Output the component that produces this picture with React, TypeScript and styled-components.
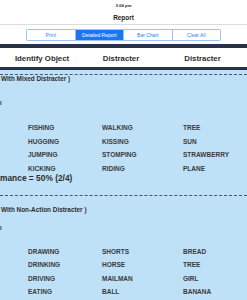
import React from "react";
import styled, { createGlobalStyle } from "styled-components";

const Global = createGlobalStyle`
  html, body { margin: 0; padding: 0; background: #ffffff; overflow: hidden; }
  body { font-family: "Liberation Sans", Arial, sans-serif; width: 247px; height: 300px; }
`;

const Page = styled.div`
  width: 247px;
  height: 300px;
  display: flex;
  flex-direction: column;
  overflow: hidden;
  background: #ffffff;
`;

const StatusBar = styled.div`
  height: 9px;
  display: flex;
  align-items: center;
  justify-content: center;
  font-size: 4.2px;
  font-weight: 700;
  color: #222;
  padding-top: 1px;
`;

const NavTitle = styled.div`
  height: 14px;
  display: flex;
  align-items: center;
  justify-content: center;
  font-size: 6.4px;
  font-weight: 700;
  color: #1c1c1c;
  border-bottom: 1px solid #dcdcdc;
`;

const ToolbarRow = styled.div`
  height: 19px;
  display: flex;
  align-items: center;
  justify-content: center;
`;

const Segmented = styled.div`
  display: flex;
  width: 195px;
  height: 12px;
  border: 1px solid #9cc3f5;
  border-radius: 1.5px;
  box-sizing: border-box;
  overflow: hidden;
`;

const Segment = styled.div<{ $active?: boolean }>`
  flex: 1;
  display: flex;
  align-items: center;
  justify-content: center;
  font-size: 5px;
  color: ${(p) => (p.$active ? "#ffffff" : "#2d7ff0")};
  background: ${(p) => (p.$active ? "#1877f6" : "#ffffff")};
  & + & {
    border-left: 1px solid #9cc3f5;
  }
`;

const NavyBar = styled.div<{ $h: number }>`
  height: ${(p) => p.$h}px;
  background: #28324a;
  flex-shrink: 0;
`;

const HeaderRow = styled.div`
  height: 19px;
  display: grid;
  grid-template-columns: 84px 74px 1fr;
  align-items: center;
  background: #ffffff;
  font-size: 7.8px;
  font-weight: 700;
  color: #2e2e2e;
`;

const HeaderCell = styled.div`
  text-align: center;
  padding-top: 2px;
`;

const Content = styled.div`
  flex: 1;
  background: #bfe1f8;
  display: flex;
  flex-direction: column;
`;

const Dashed = styled.div<{ $mt: number }>`
  margin-top: ${(p) => p.$mt}px;
  border-top: 1px dashed #4a5462;
  height: 0;
`;

const SectionTitle = styled.div<{ $mt: number }>`
  margin-top: ${(p) => p.$mt}px;
  padding-left: 1px;
  font-size: 6.4px;
  font-weight: 700;
  color: #2e2e2e;
  line-height: 8px;
`;

const Sliver = styled.div<{ $mt: number }>`
  margin-top: ${(p) => p.$mt}px;
  padding-left: 0;
  font-size: 6px;
  font-weight: 700;
  color: #2e2e2e;
  line-height: 8px;
`;

const WordGrid = styled.div<{ $mt: number }>`
  margin-top: ${(p) => p.$mt}px;
  display: grid;
  grid-template-columns: 74px 81px 1fr;
  grid-auto-rows: 13.6px;
  align-items: center;
  padding-left: 28px;
  font-size: 6.5px;
  font-weight: 700;
  color: #3a3a3a;
`;

const Performance = styled.div<{ $mt: number }>`
  margin-top: ${(p) => p.$mt}px;
  font-size: 8.4px;
  font-weight: 700;
  color: #2e2e2e;
  line-height: 10px;
`;

const set1 = [
  ["FISHING", "WALKING", "TREE"],
  ["HUGGING", "KISSING", "SUN"],
  ["JUMPING", "STOMPING", "STRAWBERRY"],
  ["KICKING", "RIDING", "PLANE"],
];

const set2 = [
  ["DRAWING", "SHORTS", "BREAD"],
  ["DRINKING", "HORSE", "TREE"],
  ["DRIVING", "MAILMAN", "GIRL"],
  ["EATING", "BALL", "BANANA"],
];

export default function App() {
  return (
    <Page>
      <Global />
      <StatusBar>3:06 pm</StatusBar>
      <NavTitle>Report</NavTitle>
      <ToolbarRow>
        <Segmented>
          <Segment>Print</Segment>
          <Segment $active>Detailed Report</Segment>
          <Segment>Bar Chart</Segment>
          <Segment>Clear All</Segment>
        </Segmented>
      </ToolbarRow>
      <NavyBar $h={4} />
      <HeaderRow>
        <HeaderCell>Identify Object</HeaderCell>
        <HeaderCell>Distracter</HeaderCell>
        <HeaderCell>Distracter</HeaderCell>
      </HeaderRow>
      <NavyBar $h={3} />
      <Content>
        <Dashed $mt={4} />
        <SectionTitle $mt={0}>With Mixed Distracter )</SectionTitle>
        <Sliver $mt={16}>l</Sliver>
        <WordGrid $mt={14}>
          {set1.flat().map((w, i) => (
            <div key={i}>{w}</div>
          ))}
        </WordGrid>
        <Performance $mt={-2}>mance = 50% (2/4)</Performance>
        <Dashed $mt={12} />
        <SectionTitle $mt={10}>With Non-Action Distracter )</SectionTitle>
        <Sliver $mt={10}>l</Sliver>
        <WordGrid $mt={12}>
          {set2.flat().map((w, i) => (
            <div key={i}>{w}</div>
          ))}
        </WordGrid>
      </Content>
    </Page>
  );
}
